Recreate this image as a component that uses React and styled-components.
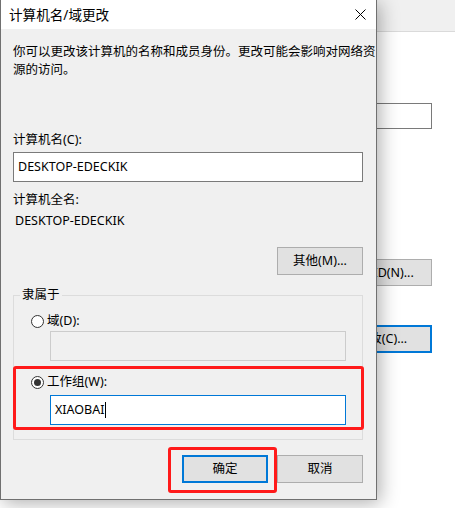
import React from "react";
import styled, { createGlobalStyle } from "styled-components";

const GlobalStyle = createGlobalStyle`
  html, body { margin: 0; padding: 0; background: #ffffff; }
  body {
    width: 455px; height: 508px; overflow: hidden;
    font-family: "Noto Sans", "Noto Sans CJK SC", sans-serif;
    color: #000;
  }
  * { box-sizing: border-box; }
`;

const Desktop = styled.div`
  position: relative;
  width: 455px;
  height: 508px;
  overflow: hidden;
  background: #fff;
`;

/* ---------- background window (partially covered) ---------- */
const BackWindow = styled.div`
  display: flex;
  flex-direction: column;
  align-items: flex-end;
  width: 100%;
  height: 100%;
  padding-right: 23px;
  font-size: 12.5px;
`;

const TabBand = styled.div`
  align-self: stretch;
  margin-right: -23px;
  height: 32px;
  background: #f0f0f0;
  border-bottom: 1px solid #dadada;
`;

const BackInput = styled.div`
  margin-top: 71px;
  width: 220px;
  height: 26px;
  border: 1px solid #7a7a7a;
  background: #fff;
`;

const BackButton = styled.div`
  margin-top: ${(p) => p.$mt}px;
  width: ${(p) => p.$w}px;
  height: ${(p) => p.$h}px;
  display: flex;
  align-items: center;
  justify-content: center;
  background: #e1e1e1;
  border: ${(p) => (p.$focus ? "2px solid #0078d7" : "1px solid #adadad")};
  line-height: 18px;
`;

/* ---------- dialog ---------- */
const Dialog = styled.div`
  position: absolute;
  left: 0;
  top: 0;
  width: 377px;
  height: 500px;
  display: flex;
  flex-direction: column;
  background: #f0f0f0;
  border: 1px solid #707070;
  border-top: none;
  box-shadow: 3px 3px 18px rgba(0, 0, 0, 0.32);
`;

const TitleBar = styled.div`
  height: 29px;
  flex: none;
  display: flex;
  align-items: center;
  justify-content: space-between;
  background: #fff;
  padding-left: 8px;
`;

const Title = styled.span`
  font-size: 13.6px;
  line-height: 18px;
  padding-top: 1px;
`;

const CloseButton = styled.div`
  width: 30px;
  height: 29px;
  display: flex;
  align-items: center;
  justify-content: center;
  padding-right: 2px;
`;

const Body = styled.div`
  flex: 1;
  display: flex;
  flex-direction: column;
  padding: 14px 13px 0 12px;
  font-size: 12.5px;
  line-height: 18px;
`;

const Description = styled.div`
  white-space: nowrap;
`;

const Label = styled.div`
  margin-top: ${(p) => p.$mt}px;
`;

const TextBox = styled.div`
  margin-top: ${(p) => p.$mt || 0}px;
  margin-left: ${(p) => p.$ml || 0}px;
  width: ${(p) => p.$w}px;
  height: 30px;
  display: flex;
  align-items: center;
  padding-left: ${(p) => p.$pl || 4}px;
  background: ${(p) => (p.$disabled ? "#f0f0f0" : "#fff")};
  border: 1px solid
    ${(p) => (p.$focus ? "#0078d7" : p.$disabled ? "#cccccc" : "#7a7a7a")};
`;

const Caret = styled.span`
  display: inline-block;
  width: 1px;
  height: 16px;
  background: #000;
  margin-left: 1px;
`;

const Value = styled.div`
  margin-top: ${(p) => p.$mt}px;
  padding-left: 2px;
`;

const ButtonRow = styled.div`
  display: flex;
  justify-content: flex-end;
  gap: ${(p) => p.$gap || 9}px;
  margin-top: ${(p) => p.$mt}px;
`;

const Button = styled.div`
  position: relative;
  width: ${(p) => p.$w || 86}px;
  height: 28px;
  display: flex;
  align-items: center;
  justify-content: center;
  background: #e1e1e1;
  border: ${(p) => (p.$default ? "2px solid #0078d7" : "1px solid #adadad")};
  ${(p) =>
    p.$marked &&
    `
    &::after {
      content: "";
      position: absolute;
      left: -16px; top: -10px; right: -11px; bottom: -12px;
      border: 3px solid #ff1a1a;
      border-radius: 3px;
    }
  `}
`;

const Group = styled.fieldset`
  margin: 11px 0 0 0;
  padding: 8px 0 14px 0;
  border: 1px solid #dcdcdc;
  min-width: 0;
  display: flex;
  flex-direction: column;
`;

const Legend = styled.legend`
  margin-left: 6px;
  padding: 0 2px;
  line-height: 18px;
`;

const RadioRow = styled.label`
  display: flex;
  align-items: center;
  height: 18px;
  padding-left: 17px;
  gap: 3px;
`;

const RadioCircle = styled.span`
  width: 13px;
  height: 13px;
  border-radius: 50%;
  border: 1px solid #333;
  background: #fff;
  display: flex;
  align-items: center;
  justify-content: center;
  &::after {
    content: "";
    width: 7px;
    height: 7px;
    border-radius: 50%;
    background: ${(p) => (p.$checked ? "#333" : "transparent")};
  }
`;

const MarkedSection = styled.div`
  position: relative;
  margin-top: 12px;
  display: flex;
  flex-direction: column;
  &::after {
    content: "";
    position: absolute;
    left: -1px; top: -7px; right: -2px; bottom: -5px;
    border: 3px solid #ff1a1a;
    border-radius: 3px;
    pointer-events: none;
  }
`;

export default function App() {
  return (
    <>
      <GlobalStyle />
      <Desktop>
        <BackWindow>
          <TabBand />
          <BackInput />
          <BackButton $mt={130} $w={105} $h={27}>网络 ID(N)...</BackButton>
          <BackButton $mt={39} $w={100} $h={28} $focus>更改(C)...</BackButton>
        </BackWindow>

        <Dialog>
          <TitleBar>
            <Title>计算机名/域更改</Title>
            <CloseButton>
              <svg width="11" height="11" viewBox="0 0 11 11">
                <path d="M0.5 0.5 L10.5 10.5 M10.5 0.5 L0.5 10.5" stroke="#000" strokeWidth="1" fill="none" />
              </svg>
            </CloseButton>
          </TitleBar>
          <Body>
            <Description>
              你可以更改该计算机的名称和成员身份。更改可能会影响对网络资
              <br />
              源的访问。
            </Description>

            <Label $mt={52}>计算机名(C):</Label>
            <TextBox $mt={3} $w={350}>DESKTOP-EDECKIK</TextBox>

            <Label $mt={9}>计算机全名:</Label>
            <Value $mt={3}>DESKTOP-EDECKIK</Value>

            <ButtonRow $mt={17}>
              <Button $w={86}>其他(M)...</Button>
            </ButtonRow>

            <Group>
              <Legend>隶属于</Legend>
              <RadioRow>
                <RadioCircle />
                <span>域(D):</span>
              </RadioRow>
              <TextBox $mt={1} $ml={36} $w={296} $disabled />
              <MarkedSection>
                <RadioRow>
                  <RadioCircle $checked />
                  <span>工作组(W):</span>
                </RadioRow>
                <TextBox $mt={4} $ml={36} $w={296} $focus>
                  XIAOBAI
                  <Caret />
                </TextBox>
              </MarkedSection>
            </Group>

            <ButtonRow $mt={15}>
              <Button $default $marked>确定</Button>
              <Button>取消</Button>
            </ButtonRow>
          </Body>
        </Dialog>
      </Desktop>
    </>
  );
}
